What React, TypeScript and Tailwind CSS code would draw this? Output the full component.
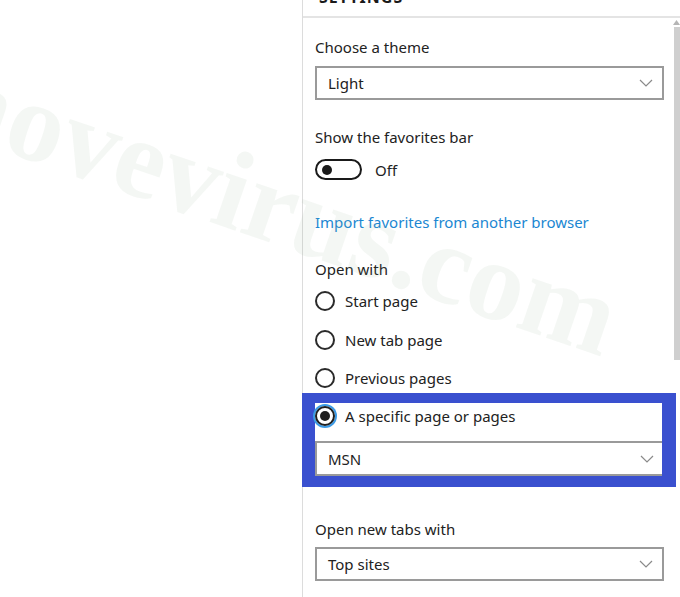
import React from "react";

function Chevron() {
  return (
    <svg width="14" height="8" viewBox="0 0 14 8" fill="none" stroke="#8a8a8a" strokeWidth="1.2">
      <polyline points="1,1 7,7 13,1" />
    </svg>
  );
}

function Select({ value, className = "" }: { value: string; className?: string }) {
  return (
    <div
      className={`flex h-[34px] w-[349px] items-center justify-between border-2 border-[#9a9a9a] bg-white pl-[11px] pr-[9px] ${className}`}
    >
      <span>{value}</span>
      <Chevron />
    </div>
  );
}

function Radio({ label, checked = false }: { label: string; checked?: boolean }) {
  return (
    <div className="flex h-[20px] items-center gap-[10px]">
      {checked ? (
        <span className="flex h-[20px] w-[20px] items-center justify-center rounded-full border-2 border-[#1f1f1f] ring-2 ring-[#3c9be6]">
          <span className="h-[10px] w-[10px] rounded-full bg-[#1f1f1f]" />
        </span>
      ) : (
        <span className="h-[20px] w-[20px] rounded-full border-2 border-[#2a2a2a]" />
      )}
      <span>{label}</span>
    </div>
  );
}

export default function App() {
  return (
    <div
      className="relative flex h-[597px] w-[680px] overflow-hidden bg-white text-[15px] leading-[20px] text-[#222]"
      style={{ fontFamily: '"Noto Sans", "Open Sans", sans-serif' }}
    >
      <div className="w-[302px] shrink-0" />

      <div className="flex min-w-0 flex-1 flex-col border-l border-[#dcdcdc]">
        <div className="h-[18px] shrink-0 overflow-hidden border-b-2 border-[#e4e4e4] pl-[16px]">
          <div className="-mt-[13px] text-[16px] font-bold tracking-[1px] text-[#1a1a1a]">SETTINGS</div>
        </div>

        <div className="flex flex-1">
          <div className="flex min-w-0 flex-1 flex-col pl-[12px]">
            <div className="mt-[19px]">Choose a theme</div>
            <Select value="Light" className="mt-[9px]" />

            <div className="mt-[27px]">Show the favorites bar</div>
            <div className="mt-[12px] flex items-center gap-[13px]">
              <span className="flex h-[21px] w-[47px] items-center rounded-full border-2 border-[#1a1a1a] pl-[5px]">
                <span className="h-[10px] w-[10px] rounded-full bg-[#1a1a1a]" />
              </span>
              <span>Off</span>
            </div>

            <div className="mt-[32px] text-[#1b87d2]">Import favorites from another browser</div>

            <div className="mt-[27px]">Open with</div>
            <div className="mt-[12px] flex flex-col gap-[18.5px]">
              <Radio label="Start page" />
              <Radio label="New tab page" />
              <Radio label="Previous pages" />
            </div>

            <div className="relative z-10 -ml-[13px] mt-[5px] w-[374px] shrink-0 border-l-[13px] border-r-[14px] border-t-[10px] border-b-[11px] border-[#3a50cf] bg-white">
              <div className="pt-[3px]">
                <Radio label="A specific page or pages" checked />
              </div>
              <div className="mt-[15px] flex h-[35px] items-center justify-between border-y-2 border-l-2 border-[#9a9a9a] pl-[11px] pr-[8px]">
                <span>MSN</span>
                <Chevron />
              </div>
            </div>

            <div className="mt-[32px]">Open new tabs with</div>
            <Select value="Top sites" className="mt-[8px]" />
          </div>

          <div className="flex w-[7px] shrink-0 flex-col items-center pt-[2px]">
            <svg width="7" height="5" viewBox="0 0 7 5" fill="#b5b5b5">
              <polygon points="3.5,0 7,5 0,5" />
            </svg>
            <div className="mt-[2px] h-[333px] w-[6px] bg-[#cfcfcf]" />
          </div>
        </div>
      </div>

      <div
        className="pointer-events-none absolute left-[-273px] top-[-39px] z-20 origin-[0_100px] rotate-[19deg] whitespace-nowrap text-[113px] font-bold leading-none text-[#8fb497]/10"
        style={{ fontFamily: '"Liberation Serif", serif' }}
      >
        2-removevirus.com
      </div>
    </div>
  );
}
